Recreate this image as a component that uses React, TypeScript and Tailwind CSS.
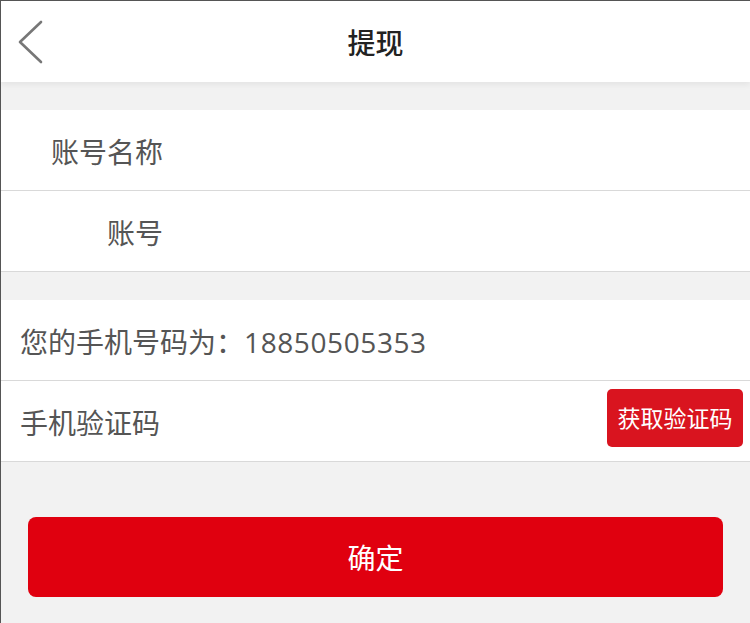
const font = "font-['Open_Sans','Noto_Sans_CJK_SC',sans-serif]";

function Row({ children, className = "" }: { children: React.ReactNode; className?: string }) {
  return (
    <div className={`h-[81px] bg-white border-b border-[#d9d9d9] flex items-center ${className}`}>
      {children}
    </div>
  );
}

export default function App() {
  return (
    <div className={`${font} w-full h-[623px] overflow-hidden bg-[#f2f2f2] border-l border-t border-[#555] flex flex-col text-[28px] text-[#555]`}>
      <header className="h-[81px] shrink-0 bg-white relative flex items-center justify-center shadow-[0_3px_6px_rgba(0,0,0,0.06)]">
        <svg className="absolute left-[17px] top-[19px]" width="26" height="44" viewBox="0 0 26 44">
          <path d="M23 2 L2 22 L23 42" fill="none" stroke="#777" strokeWidth="2.6" strokeLinecap="round" strokeLinejoin="round" />
        </svg>
        <h1 className="text-[28px] font-medium text-[#222] pt-[2px]">提现</h1>
      </header>

      <div className="h-[28px] shrink-0" />

      <Row className="pl-[46px]">
        <span className="w-[116px] text-right pt-[3px]">账号名称</span>
      </Row>
      <Row className="pl-[46px]">
        <span className="w-[116px] text-right pt-[3px]">账号</span>
      </Row>

      <div className="h-[28px] shrink-0" />

      <Row className="pl-[19px]">
        <span className="pt-[3px]">
          您的手机号码为：<span className="tracking-[0.6px]">18850505353</span>
        </span>
      </Row>
      <Row className="pl-[19px] pr-[7px] justify-between">
        <span className="pt-[3px]">手机验证码</span>
        <button className="h-[58px] w-[136px] mb-[6px] rounded-[5px] bg-[#d9141f] text-white text-[23px] flex items-center justify-center">
          获取验证码
        </button>
      </Row>

      <div className="pt-[55px] pl-[27px] pr-[27px]">
        <button className="w-full h-[80px] rounded-[8px] bg-[#e0000f] text-white text-[28px] flex items-center justify-center pt-[2px]">
          确定
        </button>
      </div>
    </div>
  );
}
